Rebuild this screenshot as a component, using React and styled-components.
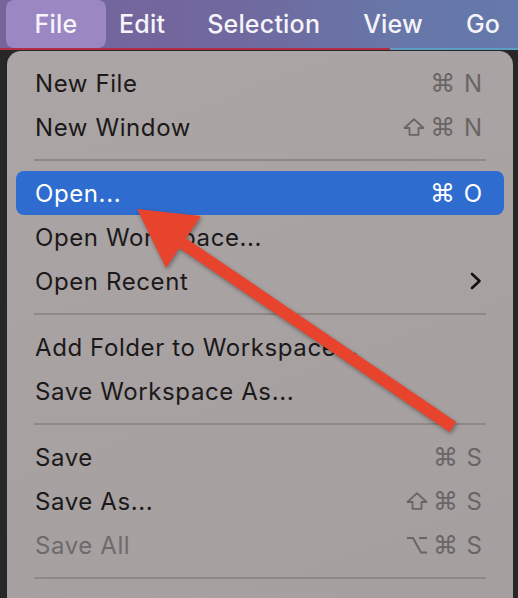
import React from 'react'
import styled, { createGlobalStyle } from 'styled-components'

const GlobalStyle = createGlobalStyle`
  html, body {
    margin: 0;
    padding: 0;
    background: #262626;
  }
  body {
    font-family: 'Inter', 'Noto Sans', 'DejaVu Sans', sans-serif;
  }
`

const Screen = styled.div`
  position: relative;
  width: 518px;
  height: 598px;
  overflow: hidden;
  background: #272727;
  display: flex;
  flex-direction: column;
`

const MenuBar = styled.div`
  height: 48px;
  display: flex;
  align-items: stretch;
  padding-left: 6px;
  background: linear-gradient(90deg, #76649a 0%, #70689e 45%, #6876a8 75%, #6579ab 100%);
`

const BarItem = styled.div`
  display: flex;
  align-items: center;
  justify-content: center;
  margin-left: ${p => p.$gap}px;
  width: ${p => (p.$active ? '100px' : 'auto')};
  border-radius: 8px;
  color: #f6f4fa;
  font-size: 25px;
  font-weight: 500;
  letter-spacing: 0.2px;
  background: ${p => (p.$active ? '#9b88c3' : 'transparent')};
`

const Strip = styled.div`
  height: 2px;
  background: linear-gradient(90deg, #b12f45 0 390px, #5d9cc3 390px);
`

const Panel = styled.div`
  margin: 1px 5px 0 7px;
  flex: 1;
  background: linear-gradient(160deg, #aba5a5 0%, #a7a1a1 60%, #a59f9f 100%);
  border-radius: 14px 14px 0 0;
  padding: 10px 9px 0;
  display: flex;
  flex-direction: column;
`

const Row = styled.div`
  height: 44px;
  flex-shrink: 0;
  display: flex;
  align-items: center;
  justify-content: space-between;
  padding: 0 22px 0 19px;
  border-radius: 8px;
  font-size: 24px;
  letter-spacing: 0.6px;
  background: ${p => (p.$selected ? '#2f6ccf' : 'transparent')};
  color: ${p => (p.$selected ? '#ffffff' : p.$disabled ? '#6f6a6a' : '#1b1919')};
`

const Keys = styled.div`
  display: flex;
  align-items: center;
  color: ${p => (p.$selected ? '#ffffff' : '#6a6565')};
`

const Cmd = styled.span`
  font-family: 'DejaVu Sans', sans-serif;
  font-size: 25px;
  line-height: 1;
  margin: 0 8px 0 5px;
`

const Letter = styled.span`
  font-size: 24px;
  letter-spacing: 0;
`

const Separator = styled.div`
  height: 22px;
  flex-shrink: 0;
  display: flex;
  align-items: center;
  padding: 0 18px;
  &::after {
    content: '';
    flex: 1;
    height: 2px;
    background: #8e8888;
  }
`

const ArrowLayer = styled.svg`
  position: absolute;
  left: 0;
  top: 0;
  pointer-events: none;
  filter: drop-shadow(1px 2px 2px rgba(0, 0, 0, 0.35));
`

const Chevron = () => (
  <svg width="12" height="18" viewBox="0 0 12 18">
    <polyline points="2,2 9.5,9 2,16" fill="none" stroke="#111" strokeWidth="2.6" strokeLinecap="round" strokeLinejoin="round" />
  </svg>
)

const ShiftIcon = () => (
  <svg width="22" height="18" viewBox="0 0 22 18">
    <path d="M11 1.2 L20.5 10 H15.5 V16.8 H6.5 V10 H1.5 Z" fill="none" stroke="currentColor" strokeWidth="1.8" strokeLinejoin="round" />
  </svg>
)

const OptionIcon = () => (
  <svg width="22" height="18" viewBox="0 0 22 18">
    <path d="M1 2 H7 L15 16.5 H21 M13 2 H21" fill="none" stroke="currentColor" strokeWidth="2" />
  </svg>
)

const items = [
  { label: 'New File', key: 'N' },
  { label: 'New Window', mod: 'shift', key: 'N' },
  { sep: true },
  { label: 'Open...', key: 'O', selected: true },
  { label: 'Open Workspace...' },
  { label: 'Open Recent', submenu: true },
  { sep: true },
  { label: 'Add Folder to Workspace...' },
  { label: 'Save Workspace As...' },
  { sep: true },
  { label: 'Save', key: 'S' },
  { label: 'Save As...', mod: 'shift', key: 'S' },
  { label: 'Save All', mod: 'option', key: 'S', disabled: true },
  { sep: true },
]

const bar = [
  { label: 'File', gap: 0, active: true },
  { label: 'Edit', gap: 13 },
  { label: 'Selection', gap: 42 },
  { label: 'View', gap: 43 },
  { label: 'Go', gap: 43 },
]

export default function App() {
  return (
    <Screen>
      <GlobalStyle />
      <MenuBar>
        {bar.map(b => (
          <BarItem key={b.label} $gap={b.gap} $active={b.active}>
            {b.label}
          </BarItem>
        ))}
      </MenuBar>
      <Strip />
      <Panel>
        {items.map((item, i) =>
          item.sep ? (
            <Separator key={i} />
          ) : (
            <Row key={i} $selected={item.selected} $disabled={item.disabled}>
              <span>{item.label}</span>
              {item.key && (
                <Keys $selected={item.selected}>
                  {item.mod === 'shift' && <ShiftIcon />}
                  {item.mod === 'option' && <OptionIcon />}
                  <Cmd>⌘</Cmd>
                  <Letter>{item.key}</Letter>
                </Keys>
              )}
              {item.submenu && <Chevron />}
            </Row>
          )
        )}
      </Panel>
      <ArrowLayer width="518" height="598" viewBox="0 0 518 598">
        <line x1="453" y1="427" x2="178" y2="240" stroke="#e8432c" strokeWidth="12" />
        <polygon points="137,209 201,216 166,268" fill="#e8432c" />
      </ArrowLayer>
    </Screen>
  )
}
